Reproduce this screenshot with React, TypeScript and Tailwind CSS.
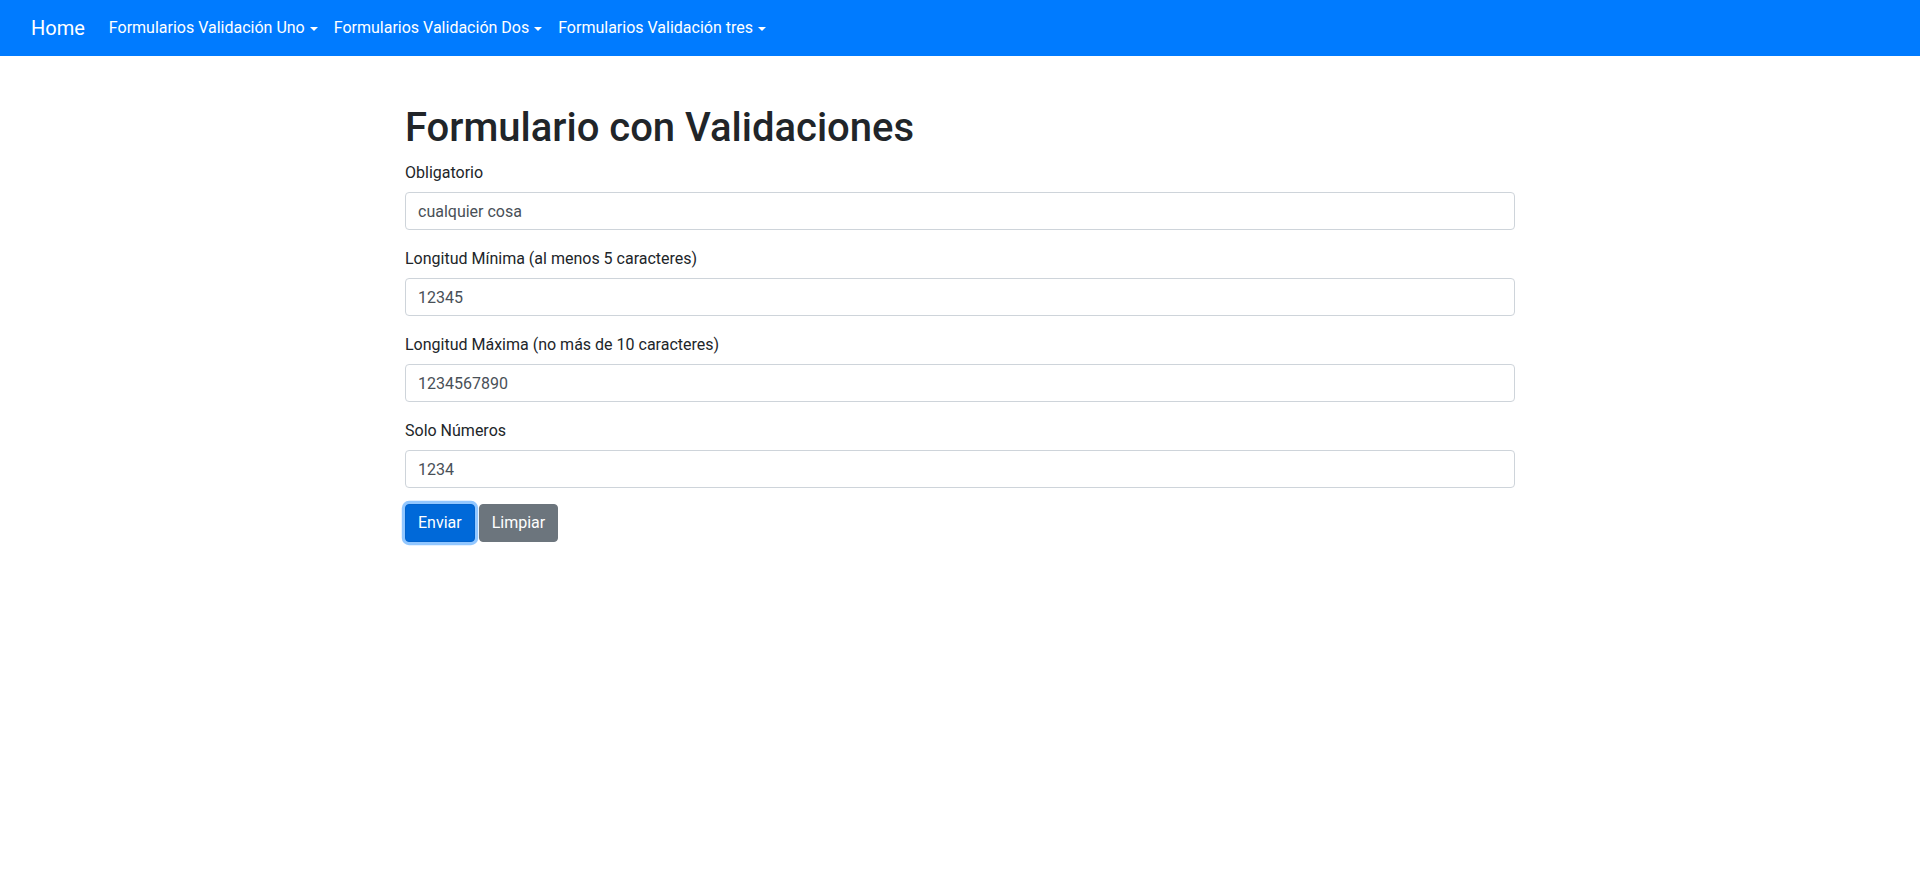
import React from "react";

const font = { fontFamily: 'Roboto, "Noto Sans", Arial, sans-serif' };

const navItems = [
    "Formularios Validación Uno",
    "Formularios Validación Dos",
    "Formularios Validación tres",
];

const fields = [
    { label: "Obligatorio", value: "cualquier cosa" },
    { label: "Longitud Mínima (al menos 5 caracteres)", value: "12345" },
    { label: "Longitud Máxima (no más de 10 caracteres)", value: "1234567890" },
    { label: "Solo Números", value: "1234" },
];

export default function App() {
    return (
        <div className="min-h-screen bg-white text-[#212529]" style={font}>
            <nav className="flex h-[56px] items-center bg-[#007bff] px-[31px]">
                <span className="mr-4 text-[20px] leading-[30px] text-white">Home</span>
                <ul className="flex">
                    {navItems.map((item) => (
                        <li key={item} className="flex items-center px-2 text-[16px] leading-6 text-white">
                            {item}
                            <span className="ml-[5px] mt-[1px] inline-block h-0 w-0 border-x-[4.8px] border-t-[4.8px] border-x-transparent border-t-white" />
                        </li>
                    ))}
                </ul>
            </nav>

            <div className="mx-auto mt-12 w-[1140px] px-[15px]">
                <h1 className="mb-2 text-[40px] font-medium leading-[48px]">Formulario con Validaciones</h1>
                <form>
                    {fields.map((f) => (
                        <div key={f.label} className="mb-4">
                            <label className="mb-2 block pt-[1px] text-[16px] leading-[23px]">{f.label}</label>
                            <input
                                defaultValue={f.value}
                                className="block h-[38px] w-full rounded-[4px] border border-[#ced4da] px-3 text-[16px] text-[#495057] outline-none"
                            />
                        </div>
                    ))}
                    <div className="flex gap-[4px]">
                        <button
                            type="button"
                            className="h-[38px] rounded-[4px] border border-[#0062cc] bg-[#0069d9] px-3 text-[16px] text-white shadow-[0_0_0_3.2px_rgba(38,143,255,0.5)]"
                        >
                            Enviar
                        </button>
                        <button
                            type="button"
                            className="h-[38px] rounded-[4px] border border-[#6c757d] bg-[#6c757d] px-3 text-[16px] text-white"
                        >
                            Limpiar
                        </button>
                    </div>
                </form>
            </div>
        </div>
    );
}
